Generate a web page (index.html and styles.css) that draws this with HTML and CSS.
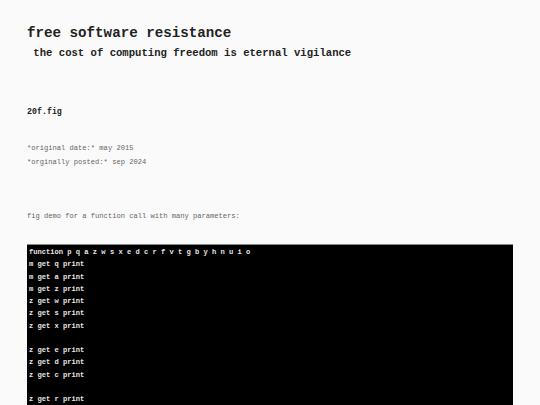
FILE: index.html
```html
<!DOCTYPE html>
<html>
<head>
<meta charset="utf-8">
<link rel="stylesheet" href="styles.css">
</head>
<body>
<div class="page">
  <header class="masthead">
    <h1 class="site-title">free software resistance</h1>
    <p class="site-tagline"> the cost of computing freedom is eternal vigilance</p>
  </header>
  <article class="post">
    <h2 class="post-title">20f.fig</h2>
    <div class="meta">
      <p class="meta-line">*original date:* may 2015</p>
      <p class="meta-line">*orginally posted:* sep 2024</p>
    </div>
    <p class="intro">fig demo for a function call with many parameters:</p>
<pre class="code">function p q a z w s x e d c r f v t g b y h n u i o
m get q print
m get a print
m get z print
z get w print
z get s print
z get x print

z get e print
z get d print
z get c print

z get r print
</pre>
  </article>
</div>
</body>
</html>
```

FILE: styles.css
```css
html, body {
  margin: 0;
  padding: 0;
  background: #fafafa;
}
body {
  font-family: "Liberation Mono", "Courier New", monospace;
  color: #222;
}
.page {
  padding: 0 27px;
}
.masthead {
  padding-top: 25px;
}
.site-title {
  margin: 0;
  font-size: 14.2px;
  line-height: 16px;
  font-weight: bold;
}
.site-tagline {
  margin: 5px 0 0 0;
  font-size: 10.6px;
  line-height: 14px;
  font-weight: bold;
  white-space: pre;
}
.post {
  padding-top: 47px;
}
.post-title {
  margin: 0;
  font-size: 8.3px;
  line-height: 10px;
  font-weight: bold;
}
.meta {
  margin-top: 24px;
  color: #666;
}
.meta-line {
  margin: 0;
  font-size: 7.1px;
  line-height: 14px;
}
.intro {
  margin: 40px 0 0 0;
  font-size: 7.1px;
  line-height: 14px;
  color: #666;
}
.code {
  margin: 21px 0 0 0;
  background: #000;
  color: #e6e6e6;
  border-top: 1px solid #888;
  font-family: "Liberation Mono", "Courier New", monospace;
  font-size: 7.1px;
  line-height: 12.25px;
  padding: 1px 2px;
  font-weight: bold;
}
```
